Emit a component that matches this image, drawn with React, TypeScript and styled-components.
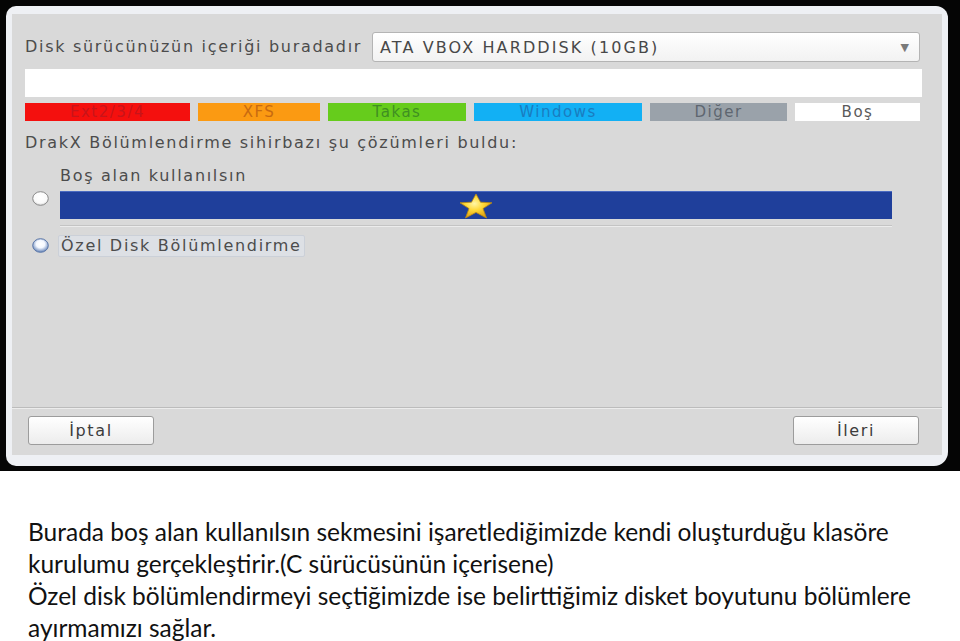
import React from 'react'
import styled, { createGlobalStyle } from 'styled-components'

const GlobalStyle = createGlobalStyle`
  html, body {
    margin: 0;
    padding: 0;
    background: #ffffff;
  }
  body {
    width: 960px;
    height: 641px;
    overflow: hidden;
  }
`

type Segment = { label: string; width: number; bg: string; fg: string }

const legend: Segment[] = [
  { label: 'Ext2/3/4', width: 165, bg: '#f4100e', fg: '#c8141a' },
  { label: 'XFS', width: 122, bg: '#fb9a12', fg: '#c86a10' },
  { label: 'Takas', width: 138, bg: '#66cc1c', fg: '#3f8f22' },
  { label: 'Windows', width: 168, bg: '#12b0f4', fg: '#1a7cc0' },
  { label: 'Diğer', width: 137, bg: '#9aa2aa', fg: '#5e6670' },
  { label: 'Boş', width: 125, bg: '#ffffff', fg: '#5a5a5a' },
]

export default function App() {
  return (
    <>
      <GlobalStyle />
      <Shot>
        <Window>
          <Panel>
            <HeaderRow>
              <Label>Disk sürücünüzün içeriği buradadır</Label>
              <Combo>
                <ComboText>ATA VBOX HARDDISK (10GB)</ComboText>
                <ComboArrow>▼</ComboArrow>
              </Combo>
            </HeaderRow>

            <DiskBar />

            <Legend>
              {legend.map((s) => (
                <LegendItem key={s.label} $w={s.width} $bg={s.bg} $fg={s.fg}>
                  {s.label}
                </LegendItem>
              ))}
            </Legend>

            <Heading>DrakX Bölümlendirme sihirbazı şu çözümleri buldu:</Heading>

            <Options>
              <OptionRow>
                <RadioCell $offset={24}>
                  <Radio />
                </RadioCell>
                <OptionBody>
                  <Label>Boş alan kullanılsın</Label>
                  <FreeBar>
                    <Star />
                  </FreeBar>
                  <ThinRule />
                </OptionBody>
              </OptionRow>

              <OptionRow>
                <RadioCell $offset={3}>
                  <Radio $checked />
                </RadioCell>
                <OptionBody>
                  <FocusLabel>Özel Disk Bölümlendirme</FocusLabel>
                </OptionBody>
              </OptionRow>
            </Options>

            <Spacer />
            <Separator />

            <ButtonRow>
              <Button>İptal</Button>
              <Button>İleri</Button>
            </ButtonRow>
          </Panel>
        </Window>
      </Shot>

      <Caption>
        <p>Burada boş alan kullanılsın sekmesini işaretlediğimizde kendi oluşturduğu klasöre</p>
        <p>kurulumu gerçekleştirir.(C sürücüsünün içerisene)</p>
        <p>Özel disk bölümlendirmeyi seçtiğimizde ise belirttiğimiz disket boyutunu bölümlere</p>
        <p>ayırmamızı sağlar.</p>
      </Caption>
    </>
  )
}

const Radio = ({ $checked }: { $checked?: boolean }) => (
  <svg width="17" height="15" viewBox="0 0 17 15">
    <defs>
      <radialGradient id={$checked ? 'rOn' : 'rOff'} cx="50%" cy="40%" r="60%">
        <stop offset="0%" stopColor="#ffffff" />
        <stop offset={$checked ? '45%' : '70%'} stopColor={$checked ? '#f4f8ff' : '#fafafa'} />
        <stop offset="100%" stopColor={$checked ? '#5f7fb4' : '#d8d8d8'} />
      </radialGradient>
    </defs>
    <ellipse
      cx="8.5"
      cy="7.5"
      rx="7.8"
      ry="6.8"
      fill={`url(#${$checked ? 'rOn' : 'rOff'})`}
      stroke={$checked ? '#5a76a8' : '#8a8a8a'}
      strokeWidth="1"
    />
  </svg>
)

const Star = () => (
  <svg width="38" height="28" viewBox="0 0 38 28">
    <defs>
      <radialGradient id="starFill" cx="45%" cy="40%" r="60%">
        <stop offset="0%" stopColor="#fff6a8" />
        <stop offset="45%" stopColor="#ffd93a" />
        <stop offset="100%" stopColor="#e0a010" />
      </radialGradient>
    </defs>
    <polygon
      points="19,2 23.5,10.2 35,10.8 26,16.6 29.5,26 19,20.4 8.5,26 12,16.6 3,10.8 14.5,10.2"
      fill="url(#starFill)"
      stroke="#b98a12"
      strokeWidth="0.8"
      strokeLinejoin="round"
    />
  </svg>
)

const Shot = styled.div`
  background: #050505;
  height: 471px;
  box-sizing: border-box;
  padding: 6px 12px 5px 6px;
  display: flex;
`

const Window = styled.div`
  flex: 1;
  display: flex;
  background: #eef0f4;
  border-radius: 10px 12px 14px 10px;
  padding: 8px 6px 11px 6px;
`

const Panel = styled.div`
  flex: 1;
  display: flex;
  flex-direction: column;
  background: #d9d9d9;
  padding: 18px 20px 10px 13px;
  font-family: 'DejaVu Sans', sans-serif;
  color: #4c4c4c;
`

const Label = styled.div`
  font-size: 16px;
  line-height: 18px;
  white-space: nowrap;
  letter-spacing: 1.7px;
`

const Heading = styled(Label)`
  margin-top: 13px;
`

const HeaderRow = styled.div`
  display: flex;
  align-items: center;
  gap: 10px;
  height: 30px;
  margin-right: 2px;
`

const Combo = styled.div`
  flex: 1;
  height: 30px;
  box-sizing: border-box;
  display: flex;
  align-items: center;
  justify-content: space-between;
  padding: 0 10px 0 7px;
  border: 1px solid #b4b4b4;
  border-radius: 3px;
  background: linear-gradient(#ffffff, #f2f2f2);
`

const ComboText = styled.span`
  font-size: 16px;
  letter-spacing: 2.1px;
  color: #484848;
`

const ComboArrow = styled.span`
  font-size: 11px;
  color: #7a7a7a;
`

const DiskBar = styled.div`
  height: 28px;
  background: #ffffff;
  margin-top: 7px;
`

const Legend = styled.div`
  display: flex;
  gap: 8px;
  margin-top: 6px;
  height: 18px;
`

const LegendItem = styled.div<{ $w: number; $bg: string; $fg: string }>`
  width: ${(p) => p.$w}px;
  background: ${(p) => p.$bg};
  color: ${(p) => p.$fg};
  font-size: 15px;
  line-height: 18px;
  text-align: center;
  letter-spacing: 1.5px;
`

const Options = styled.div`
  display: flex;
  flex-direction: column;
  margin-top: 15px;
  gap: 8px;
`

const OptionRow = styled.div`
  display: flex;
  align-items: flex-start;
`

const RadioCell = styled.div<{ $offset: number }>`
  width: 35px;
  padding-left: 7px;
  box-sizing: border-box;
  padding-top: ${(p) => p.$offset}px;
`

const OptionBody = styled.div`
  flex: 1;
  display: flex;
  flex-direction: column;
  margin-right: 30px;
`

const FreeBar = styled.div`
  height: 28px;
  margin-top: 6px;
  background: #1f3f9b;
  border-top: 1px solid #4a6ac0;
  box-sizing: border-box;
  display: flex;
  align-items: center;
  justify-content: center;
`

const ThinRule = styled.div`
  height: 1px;
  margin-top: 6px;
  background: #c4c4c4;
  border-bottom: 1px solid #ececec;
`

const FocusLabel = styled.div`
  align-self: flex-start;
  font-size: 16px;
  line-height: 18px;
  letter-spacing: 1.7px;
  padding: 1px 2px;
  margin-left: -2px;
  background: #dde0e5;
  border: 1px solid #cbd0d8;
  border-radius: 2px;
`

const Spacer = styled.div`
  flex: 1;
`

const Separator = styled.div`
  height: 1px;
  background: #bcbcbc;
  border-bottom: 1px solid #ececec;
  margin: 0 -20px 0 -13px;
`

const ButtonRow = styled.div`
  display: flex;
  justify-content: space-between;
  margin-top: 7px;
  padding: 0 3px 0 3px;
`

const Button = styled.div`
  width: 126px;
  height: 29px;
  box-sizing: border-box;
  display: flex;
  align-items: center;
  justify-content: center;
  border: 1px solid #9c9c9c;
  border-radius: 3px;
  background: linear-gradient(#ffffff, #ececec);
  font-size: 16px;
  letter-spacing: 1.6px;
  color: #3c3c3c;
`

const Caption = styled.div`
  padding: 45px 0 0 28px;
  font-family: 'Lato', 'Open Sans', sans-serif;
  font-size: 24.5px;
  line-height: 32px;
  color: #111111;

  p {
    margin: 0;
    white-space: nowrap;
  }
`
